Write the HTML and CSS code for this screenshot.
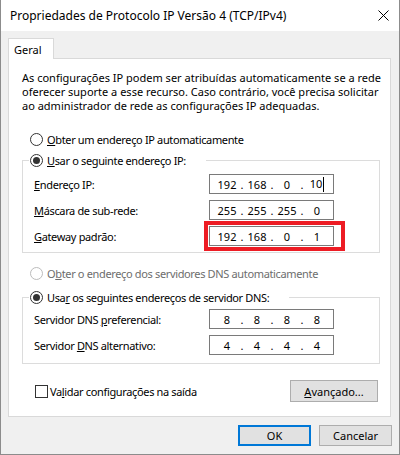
FILE: index.html
```html
<!DOCTYPE html>
<html lang="pt-BR">
<head>
<meta charset="utf-8">
<title>Propriedades de Protocolo IP Versão 4 (TCP/IPv4)</title>
<link rel="stylesheet" href="styles.css">
</head>
<body>
<div class="window">
  <div class="titlebar">
    <span class="title">Propriedades de Protocolo IP Versão 4 (TCP/IPv4)</span>
    <svg class="close" width="11" height="11" viewBox="0 0 11 11"><path d="M0.5 0.5 L10.5 10.5 M10.5 0.5 L0.5 10.5" stroke="#000" stroke-width="1" fill="none"/></svg>
  </div>
  <div class="client">
    <div class="tabs"><div class="tab">Geral</div></div>
    <div class="panel">
      <p class="desc">As configurações IP podem ser atribuídas automaticamente se a rede<br>oferecer suporte a esse recurso. Caso contrário, você precisa solicitar<br>ao administrador de rede as configurações IP adequadas.</p>

      <div class="radio-row auto-ip"><span class="radio"></span><span class="txt"><u>O</u>bter um endereço IP automaticamente</span></div>

      <div class="group group-ip">
        <div class="legend"><span class="radio checked"></span><span class="txt"><u>U</u>sar o seguinte endereço IP:</span></div>
        <div class="fields fields-ip">
          <span class="label txt"><u>E</u>ndereço IP:</span>
          <div class="ip"><span class="oct">192</span><span class="dot">.</span><span class="oct">168</span><span class="dot">.</span><span class="oct">0</span><span class="dot">.</span><span class="oct">10<span class="caret"></span></span></div>
          <span class="label txt"><u>M</u>áscara de sub-rede:</span>
          <div class="ip"><span class="oct">255</span><span class="dot">.</span><span class="oct">255</span><span class="dot">.</span><span class="oct">255</span><span class="dot">.</span><span class="oct">0</span></div>
          <span class="label txt"><u>G</u>ateway padrão:</span>
          <div class="ip highlight"><span class="oct">192</span><span class="dot">.</span><span class="oct">168</span><span class="dot">.</span><span class="oct">0</span><span class="dot">.</span><span class="oct">1</span></div>
        </div>
      </div>

      <div class="radio-row auto-dns disabled"><span class="radio"></span><span class="txt">O<u>b</u>ter o endereço dos servidores DNS automaticamente</span></div>

      <div class="group group-dns">
        <div class="legend"><span class="radio checked"></span><span class="txt">Usa<u>r</u> os seguintes endereços de servidor DNS:</span></div>
        <div class="fields fields-dns">
          <span class="label txt">Servidor DNS <u>p</u>referencial:</span>
          <div class="ip"><span class="oct">8</span><span class="dot">.</span><span class="oct">8</span><span class="dot">.</span><span class="oct">8</span><span class="dot">.</span><span class="oct">8</span></div>
          <span class="label txt">Servidor <u>D</u>NS alternativo:</span>
          <div class="ip"><span class="oct">4</span><span class="dot">.</span><span class="oct">4</span><span class="dot">.</span><span class="oct">4</span><span class="dot">.</span><span class="oct">4</span></div>
        </div>
      </div>

      <div class="bottom-row">
        <span class="checkbox"></span>
        <span class="check-label txt">Va<u>l</u>idar configurações na saída</span>
        <button class="btn btn-adv" type="button"><span><u>A</u>vançado...</span></button>
      </div>
    </div>
    <div class="buttons">
      <button class="btn btn-dlg btn-default" type="button">OK</button>
      <button class="btn btn-dlg" type="button">Cancelar</button>
    </div>
  </div>
</div>
</body>
</html>
```

FILE: styles.css
```css
html, body {
  margin: 0;
  padding: 0;
  background: #fff;
}

body {
  font-family: "Noto Sans", "Open Sans", sans-serif;
  font-size: 11px;
  color: #000;
}

u {
  text-decoration: underline;
  text-underline-offset: 1px;
}

.txt {
  letter-spacing: -0.35px;
}

.window {
  width: 400px;
  height: 455px;
  box-sizing: border-box;
  border: 1px solid #8c8c8c;
  border-top: none;
  background: #f0f0f0;
  display: flex;
  flex-direction: column;
}

.titlebar {
  height: 31px;
  flex: none;
  background: #fff;
  display: flex;
  align-items: center;
  padding: 0 10px 0 9px;
}

.title {
  flex: 1;
  font-size: 12px;
  white-space: nowrap;
}

.close {
  display: block;
  flex: none;
}

.client {
  flex: 1;
  padding: 7px 8px 0 7px;
  display: flex;
  flex-direction: column;
}

.tabs {
  display: flex;
}

.tab {
  position: relative;
  box-sizing: border-box;
  width: 46px;
  height: 21px;
  margin-bottom: -1px;
  padding-left: 5px;
  background: #fff;
  border: 1px solid #d9d9d9;
  border-bottom: none;
  display: flex;
  align-items: center;
}

.panel {
  background: #fff;
  border: 1px solid #d9d9d9;
  padding: 12px 10px 14px 13px;
}

.desc {
  margin: 0;
  line-height: 14px;
  white-space: nowrap;
}

.radio-row {
  display: flex;
  align-items: center;
  gap: 4px;
  height: 16px;
  padding-left: 8px;
  white-space: nowrap;
}

.auto-ip {
  margin-top: 18px;
}

.auto-dns {
  margin-top: 12px;
}

.disabled {
  color: #6d6d6d;
}

.radio {
  flex: none;
  box-sizing: border-box;
  width: 13px;
  height: 13px;
  border: 1px solid #333;
  border-radius: 50%;
  background: #fff;
  display: flex;
  align-items: center;
  justify-content: center;
}

.radio.checked::before {
  content: "";
  width: 7px;
  height: 7px;
  border-radius: 50%;
  background: #333;
}

.disabled .radio {
  border-color: #bcbcbc;
}

.group {
  border: 1px solid #dcdcdc;
}

.group-ip {
  margin-top: 13px;
  padding-bottom: 6px;
}

.group-dns {
  margin-top: 16px;
  padding-bottom: 8px;
}

.legend {
  width: fit-content;
  height: 16px;
  margin: -9px 0 0 6px;
  padding: 0 20px 0 1px;
  background: #fff;
  display: flex;
  align-items: center;
  gap: 4px;
  white-space: nowrap;
}

.fields {
  display: grid;
  grid-template-columns: 175px 125px;
  grid-auto-rows: 20px;
  row-gap: 6px;
  align-items: center;
  padding-left: 11px;
}

.fields-ip {
  margin-top: 6px;
}

.fields-dns {
  margin-top: 4px;
}

.label {
  white-space: nowrap;
}

.ip {
  box-sizing: border-box;
  height: 20px;
  border: 1px solid #7a7a7a;
  background: #fff;
  display: flex;
  align-items: center;
  padding-left: 5px;
}

.oct {
  width: 24px;
  text-align: center;
  white-space: nowrap;
}

.dot {
  width: 6px;
  text-align: center;
}

.caret {
  display: inline-block;
  width: 1px;
  height: 15px;
  background: #000;
  vertical-align: middle;
  margin-left: 1px;
}

.highlight {
  position: relative;
}

.highlight::after {
  content: "";
  position: absolute;
  left: -6px;
  top: -6px;
  right: -12px;
  bottom: -6px;
  border: 4px solid #ed1c24;
}

.bottom-row {
  margin-top: 16px;
  height: 22px;
  display: flex;
  align-items: center;
}

.checkbox {
  flex: none;
  box-sizing: border-box;
  width: 13px;
  height: 13px;
  margin-left: 13px;
  border: 1px solid #333;
  background: #fff;
}

.check-label {
  margin-left: 2px;
  white-space: nowrap;
}

.btn {
  appearance: none;
  box-sizing: border-box;
  margin: 0;
  padding: 0;
  font: inherit;
  color: #000;
  background: #e1e1e1;
  border: 1px solid #adadad;
  display: flex;
  align-items: center;
  justify-content: center;
  white-space: nowrap;
}

.btn-adv {
  width: 88px;
  height: 22px;
  margin-left: auto;
  margin-right: 2px;
}

.buttons {
  margin-top: 8px;
  margin-right: -1px;
  display: flex;
  justify-content: flex-end;
  gap: 8px;
}

.btn-dlg {
  width: 73px;
  height: 21px;
}

.btn-default {
  border: 2px solid #0078d7;
}
```
